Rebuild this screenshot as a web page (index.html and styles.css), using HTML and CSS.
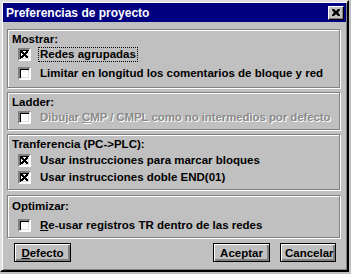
FILE: index.html
```html
<!DOCTYPE html>
<html lang="es">
<head>
    <meta charset="UTF-8">
    <title>Preferencias de proyecto</title>
    <link rel="stylesheet" href="styles.css">
</head>
<body>
    <div class="dialog">
        <div class="titlebar">
            <span class="title">Preferencias de proyecto</span>
            <span class="close-btn">
                <svg width="8" height="7" viewBox="0 0 8 7"><path d="M0 0h2l2 2 2-2h2v1l-2 2.5 2 2.5v1h-2l-2-2-2 2h-2v-1l2-2.5-2-2.5z" fill="#000"/></svg>
            </span>
        </div>

        <div class="content">
            <!-- Mostrar -->
            <div class="group">
                <div class="group-title">Mostrar:</div>
                <div class="check-row short">
                    <span class="box checked"></span>
                    <span class="label focused">Redes agrupadas</span>
                </div>
                <div class="check-row tall">
                    <span class="box"></span>
                    <span class="label">Limitar en longitud los comentarios de bloque y red</span>
                </div>
            </div>

            <!-- Ladder -->
            <div class="group">
                <div class="group-title">Ladder:</div>
                <div class="check-row disabled">
                    <span class="box"></span>
                    <span class="label">Dibujar <u>C</u>MP / CMPL como no intermedios por defecto</span>
                </div>
            </div>

            <!-- Transferencia -->
            <div class="group">
                <div class="group-title trans-title">Tranferencia (PC-&gt;PLC):</div>
                <div class="check-row">
                    <span class="box checked"></span>
                    <span class="label">Usar instrucciones para marcar bloques</span>
                </div>
                <div class="check-row">
                    <span class="box checked"></span>
                    <span class="label">Usar instrucciones doble END(01)</span>
                </div>
            </div>

            <!-- Optimizar -->
            <div class="group group-opt">
                <div class="group-title opt-title">Optimizar:</div>
                <div class="check-row">
                    <span class="box"></span>
                    <span class="label"><u>R</u>e-usar registros TR dentro de las redes</span>
                </div>
            </div>

            <div class="buttons">
                <button class="btn btn-defecto"><u>D</u>efecto</button>
                <span class="spacer"></span>
                <button class="btn btn-aceptar">Aceptar</button>
                <button class="btn btn-cancelar">Cancelar</button>
            </div>
        </div>
    </div>
</body>
</html>
```

FILE: styles.css
```css
body {
    margin: 0;
    background-color: #c0c0c0;
    font-family: "Liberation Sans", Arial, sans-serif;
    font-size: 11.5px;
    font-weight: bold;
    color: #000;
}

.dialog {
    width: 345px;
    height: 268px;
    border: 2px solid;
    border-color: #dfdfdf #000 #000 #dfdfdf;
    box-shadow: inset 1px 1px #fff, inset -1px -1px #808080;
    background-color: #c0c0c0;
    display: flex;
    flex-direction: column;
}

.titlebar {
    height: 19px;
    margin: 1px 1px 0 1px;
    background-color: #000080;
    color: #fff;
    display: flex;
    align-items: center;
    justify-content: space-between;
    padding: 0 2px 0 3px;
    font-size: 12px;
}

.close-btn {
    width: 14px;
    height: 12px;
    background-color: #c0c0c0;
    border: 1px solid;
    border-color: #fff #000 #000 #fff;
    box-shadow: inset -1px -1px #808080;
    display: flex;
    align-items: center;
    justify-content: center;
}

.content {
    padding: 7px 7px 0 5px;
    display: flex;
    flex-direction: column;
    gap: 4px;
}

/* etched group frame */
.group {
    border: 1px solid #808080;
    box-shadow: inset 1px 1px #fff, 1px 1px #fff;
    padding: 3px 4px 3px 4px;
    display: flex;
    flex-direction: column;
    white-space: nowrap;
}

.group-opt {
    margin-top: 1px;
}

.group-title {
    height: 13px;
    line-height: 13px;
}

.trans-title {
    height: 14px;
}

.opt-title {
    height: 17px;
    padding-top: 1px;
    line-height: 12px;
}

.check-row {
    height: 17px;
    display: flex;
    align-items: center;
    padding-left: 6px;
    gap: 8px;
}

.check-row.short {
    height: 16px;
}

.check-row.tall {
    height: 22px;
}

.box {
    width: 9px;
    height: 9px;
    background-color: #fff;
    border: 2px solid;
    border-color: #808080 #fff #fff #808080;
    box-shadow: inset 1px 1px #000, inset -1px -1px #dfdfdf;
    position: relative;
    flex-shrink: 0;
}

.box.checked::after {
    content: "";
    position: absolute;
    left: 1px;
    top: 1px;
    width: 7px;
    height: 7px;
    background:
        linear-gradient(45deg, transparent 38%, #000 38%, #000 62%, transparent 62%),
        linear-gradient(-45deg, transparent 38%, #000 38%, #000 62%, transparent 62%);
}

.label {
    line-height: 13px;
    padding: 0 1px;
}

.label.focused {
    outline: 1px dotted #000;
}

.disabled .label {
    color: #8a8a8a;
    text-shadow: 1px 1px #fff;
    letter-spacing: -0.1px;
}

.buttons {
    display: flex;
    gap: 10px;
    padding: 1px 4px 0 7px;
}

.spacer {
    flex: 1;
}

.btn {
    font-family: inherit;
    font-size: 11.5px;
    font-weight: bold;
    color: #000;
    height: 19px;
    padding: 0 4px;
    background-color: #c0c0c0;
    border: 1px solid #000;
    box-shadow: inset 1px 1px #fff, inset -1px -1px #808080, inset -2px -2px #808080;
}

.btn-defecto {
    width: 57px;
}

.btn-aceptar {
    width: 57px;
}

.btn-cancelar {
    width: 56px;
}
```
